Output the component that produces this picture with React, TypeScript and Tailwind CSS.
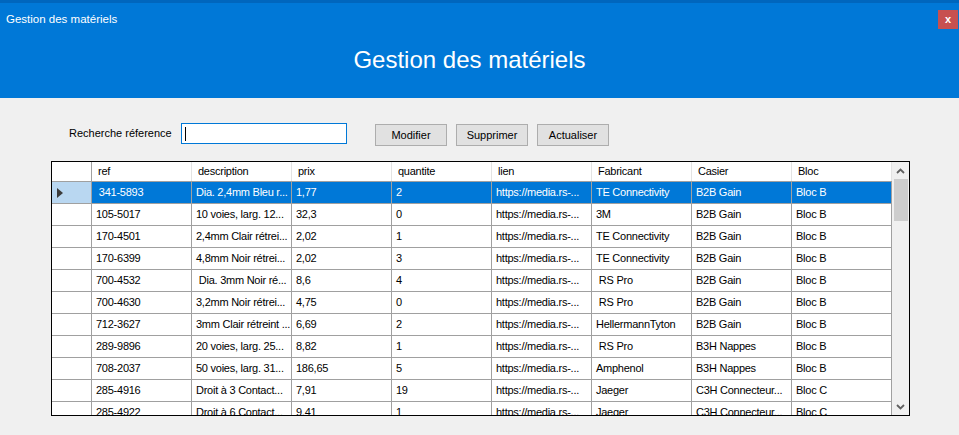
import React from "react";

const headers = ["ref", "description", "prix", "quantite", "lien", "Fabricant", "Casier", "Bloc"];
const L = "https://media.rs-...";
const rows: string[][] = [
  [" 341-5893", "Dia. 2,4mm Bleu r...", "1,77", "2", L, "TE Connectivity", "B2B Gain", "Bloc B"],
  ["105-5017", "10 voies, larg. 12...", "32,3", "0", L, "3M", "B2B Gain", "Bloc B"],
  ["170-4501", "2,4mm Clair rétrei...", "2,02", "1", L, "TE Connectivity", "B2B Gain", "Bloc B"],
  ["170-6399", "4,8mm Noir rétrei...", "2,02", "3", L, "TE Connectivity", "B2B Gain", "Bloc B"],
  ["700-4532", " Dia. 3mm Noir ré...", "8,6", "4", L, " RS Pro", "B2B Gain", "Bloc B"],
  ["700-4630", "3,2mm Noir rétrei...", "4,75", "0", L, " RS Pro", "B2B Gain", "Bloc B"],
  ["712-3627", "3mm Clair rétreint ...", "6,69", "2", L, "HellermannTyton", "B2B Gain", "Bloc B"],
  ["289-9896", "20 voies, larg. 25...", "8,82", "1", L, " RS Pro", "B3H Nappes", "Bloc B"],
  ["708-2037", "50 voies, larg. 31...", "186,65", "5", L, "Amphenol", "B3H Nappes", "Bloc B"],
  ["285-4916", "Droit à 3 Contact...", "7,91", "19", L, "Jaeger", "C3H Connecteur...", "Bloc C"],
  ["285-4922", "Droit à 6 Contact...", "9,41", "1", L, "Jaeger", "C3H Connecteur...", "Bloc C"],
];

function Chevron({ up }: { up: boolean }) {
  return (
    <svg width="9" height="6" viewBox="0 0 9 6">
      {up ? (
        <path d="M1 5 L4.5 1.5 L8 5" fill="none" stroke="#606060" strokeWidth="1.8" />
      ) : (
        <path d="M1 1 L4.5 4.5 L8 1" fill="none" stroke="#606060" strokeWidth="1.8" />
      )}
    </svg>
  );
}

export default function App() {
  return (
    <div className="w-[959px] h-[435px] overflow-hidden bg-[#f0f0f0] font-['Liberation_Sans',Arial,sans-serif] text-black">
      {/* Blue header */}
      <div className="h-[98px] bg-[#0078d7] flex flex-col">
        <div className="h-[3px] bg-[#0066bd]" />
        <div className="h-[33px] flex items-center justify-between">
          <span className="pl-[6px] text-[11.5px] text-white">Gestion des matériels</span>
          <div className="mr-[1px] w-[20px] h-[19px] bg-[#c75050] flex items-center justify-center text-white text-[11px] font-bold leading-none pb-[1px]">
            x
          </div>
        </div>
        <div className="mt-[12px] pr-[20px] text-center text-white text-[24px] leading-[24px]">
          Gestion des matériels
        </div>
      </div>

      {/* Search row */}
      <div className="mt-[25px] flex items-start h-[23px]">
        <div className="ml-[69px] w-[112px] h-[21px] flex items-center text-[11px] whitespace-nowrap">
          Recherche réference
        </div>
        <div className="w-[166px] h-[21px] bg-white border border-[#0078d7] flex items-center pl-[3px]">
          <div className="w-[1px] h-[14px] bg-black" />
        </div>
        <button className="ml-[28px] mt-[1px] w-[72px] h-[22px] bg-[#e1e1e1] border border-[#adadad] text-[11px] text-black flex items-center justify-center">
          Modifier
        </button>
        <button className="ml-[9px] mt-[1px] w-[72px] h-[22px] bg-[#e1e1e1] border border-[#adadad] text-[11px] text-black flex items-center justify-center">
          Supprimer
        </button>
        <button className="ml-[9px] mt-[1px] w-[72px] h-[22px] bg-[#e1e1e1] border border-[#adadad] text-[11px] text-black flex items-center justify-center">
          Actualiser
        </button>
      </div>

      {/* Grid */}
      <div className="mt-[15px] ml-[51px] w-[859px] h-[255px] border border-black bg-white flex">
        <div className="w-[840px] h-full overflow-hidden flex flex-col text-[11px] tracking-[-0.25px]">
          {/* header */}
          <div className="flex h-[20px] shrink-0 border-b border-[#a0a0a0]">
            <div className="w-[40px] shrink-0 border-r border-[#a0a0a0]" />
            {headers.map((h) => (
              <div
                key={h}
                className="w-[100px] shrink-0 border-r border-[#e3e3e3] pl-[6px] flex items-center whitespace-pre overflow-hidden"
              >
                {h}
              </div>
            ))}
          </div>
          {rows.map((r, i) => {
            const sel = i === 0;
            return (
              <div key={i} className="flex h-[22px] shrink-0 border-b border-[#a0a0a0]">
                <div
                  className={`w-[40px] shrink-0 border-r border-[#a0a0a0] flex items-center pl-[5px] ${
                    sel ? "bg-[#b9d7f1]" : "bg-white"
                  }`}
                >
                  {sel && (
                    <div className="w-0 h-0 border-y-[5px] border-y-transparent border-l-[6px] border-l-[#3c3c3c]" />
                  )}
                </div>
                {r.map((c, j) => (
                  <div
                    key={j}
                    className={`w-[100px] shrink-0 border-r border-[#a0a0a0] pl-[4px] flex items-center whitespace-pre overflow-hidden ${
                      sel ? "bg-[#0078d7] text-white" : "bg-white text-black"
                    }`}
                  >
                    {c}
                  </div>
                ))}
              </div>
            );
          })}
        </div>
        {/* Scrollbar */}
        <div className="w-[17px] h-full bg-[#f0f0f0] flex flex-col">
          <div className="h-[17px] shrink-0 flex items-center justify-center">
            <Chevron up={true} />
          </div>
          <div className="h-[42px] shrink-0 ml-[2px] mr-[1px] bg-[#cdcdcd]" />
          <div className="flex-1" />
          <div className="h-[17px] shrink-0 flex items-center justify-center">
            <Chevron up={false} />
          </div>
        </div>
      </div>
    </div>
  );
}
